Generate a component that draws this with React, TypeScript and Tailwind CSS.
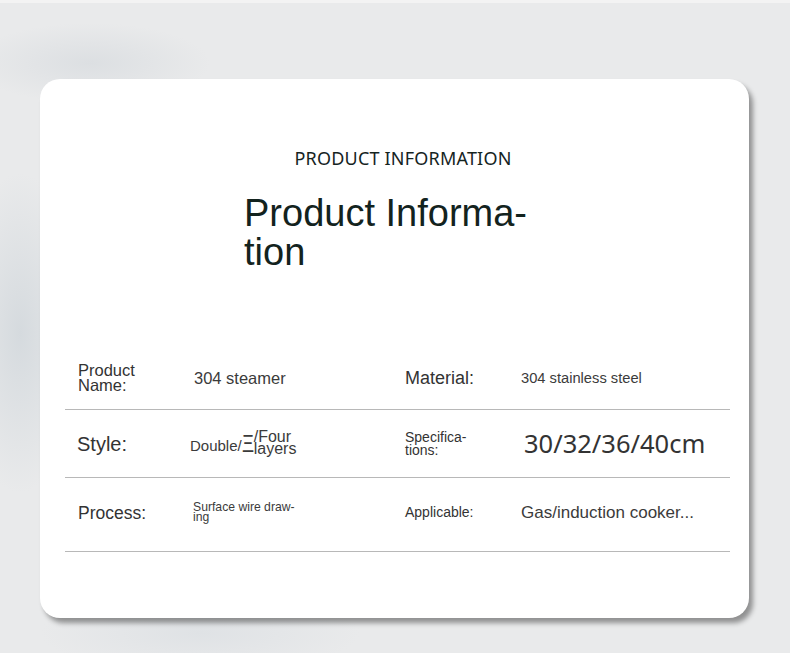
import React from 'react';

const sans = "font-['Liberation_Sans',Arial,sans-serif]";

export default function App() {
  return (
    <div className="h-[653px] w-full overflow-hidden bg-[#e9eaeb] bg-[radial-gradient(ellipse_60px_160px_at_20px_330px,#d5dade_0%,transparent_100%),radial-gradient(ellipse_120px_40px_at_90px_60px,#dcdfe2_0%,transparent_100%),radial-gradient(ellipse_160px_40px_at_200px_630px,#dfe2e5_0%,transparent_100%)] border-t-[3px] border-[#f3f3f3] pt-[76px] pl-[40px]">
      <div className="w-[709px] h-[539px] rounded-[20px] bg-white shadow-[4px_5px_5px_rgba(0,0,0,0.38)] flex flex-col">
        {/* Header */}
        <div className="pt-[67px] pl-[17px] text-center">
          <p className="font-['Noto_Sans',sans-serif] text-[18px] leading-[25px] text-[#16241f] tracking-[0.2px]">
            PRODUCT INFORMATION
          </p>
        </div>
        <h1 className={`${sans} mt-[23px] ml-[204px] text-[38px] leading-[39px] text-[#13231e]`}>
          Product Informa-
          <br />
          tion
        </h1>

        {/* Spec table */}
        <div className={`${sans} mt-[73px] ml-[25px] w-[665px] text-[#333]`}>
          <div className="grid grid-cols-[129px_211px_116px_1fr] items-center h-[65px] border-b border-[#b8b8b8]">
            <div className="pl-[13px] text-[16.5px] leading-[15px] mt-[2px]">
              Product
              <br />
              Name:
            </div>
            <div className="text-[16.5px] text-[#3b3b3b] mt-[3px]">304 steamer</div>
            <div className="text-[18px] mt-[3px]">Material:</div>
            <div className="text-[14.7px] text-[#3b3b3b] mt-[3px]">304 stainless steel</div>
          </div>

          <div className="grid grid-cols-[129px_211px_116px_1fr] items-center h-[68px] border-b border-[#b8b8b8]">
            <div className="pl-[12px] text-[20px]">Style:</div>
            <div className="-ml-[4px] flex items-center text-[15px] text-[#3b3b3b]">
              <span className="mt-[6px]">Double/</span>
              <span className="inline-block w-[12px] overflow-visible">
                <span className="inline-block origin-left scale-x-[0.55] text-[22px] leading-none font-['Noto_Sans_CJK_SC',sans-serif]">三</span>
              </span>
              <span className="text-[16px] leading-[12px] -mt-[1px]">
                /Four
                <br />
                layers
              </span>
            </div>
            <div className="text-[14px] leading-[13px]">
              Specifica-
              <br />
              tions:
            </div>
            <div className="ml-[3px] font-['Noto_Sans',sans-serif] text-[25.5px] text-[#333]">30/32/36/40cm</div>
          </div>

          <div className="grid grid-cols-[129px_211px_116px_1fr] items-center h-[74px] border-b border-[#b8b8b8]">
            <div className="pl-[13px] text-[17.5px] -mt-[3px]">Process:</div>
            <div className="-ml-[1px] text-[12.2px] leading-[10px] text-[#3b3b3b] -mt-[6px]">
              Surface wire draw-
              <br />
              ing
            </div>
            <div className="text-[14px] -mt-[5px]">Applicable:</div>
            <div className="text-[17px] text-[#3b3b3b] -mt-[3px]">Gas/induction cooker...</div>
          </div>
        </div>
      </div>
    </div>
  );
}
